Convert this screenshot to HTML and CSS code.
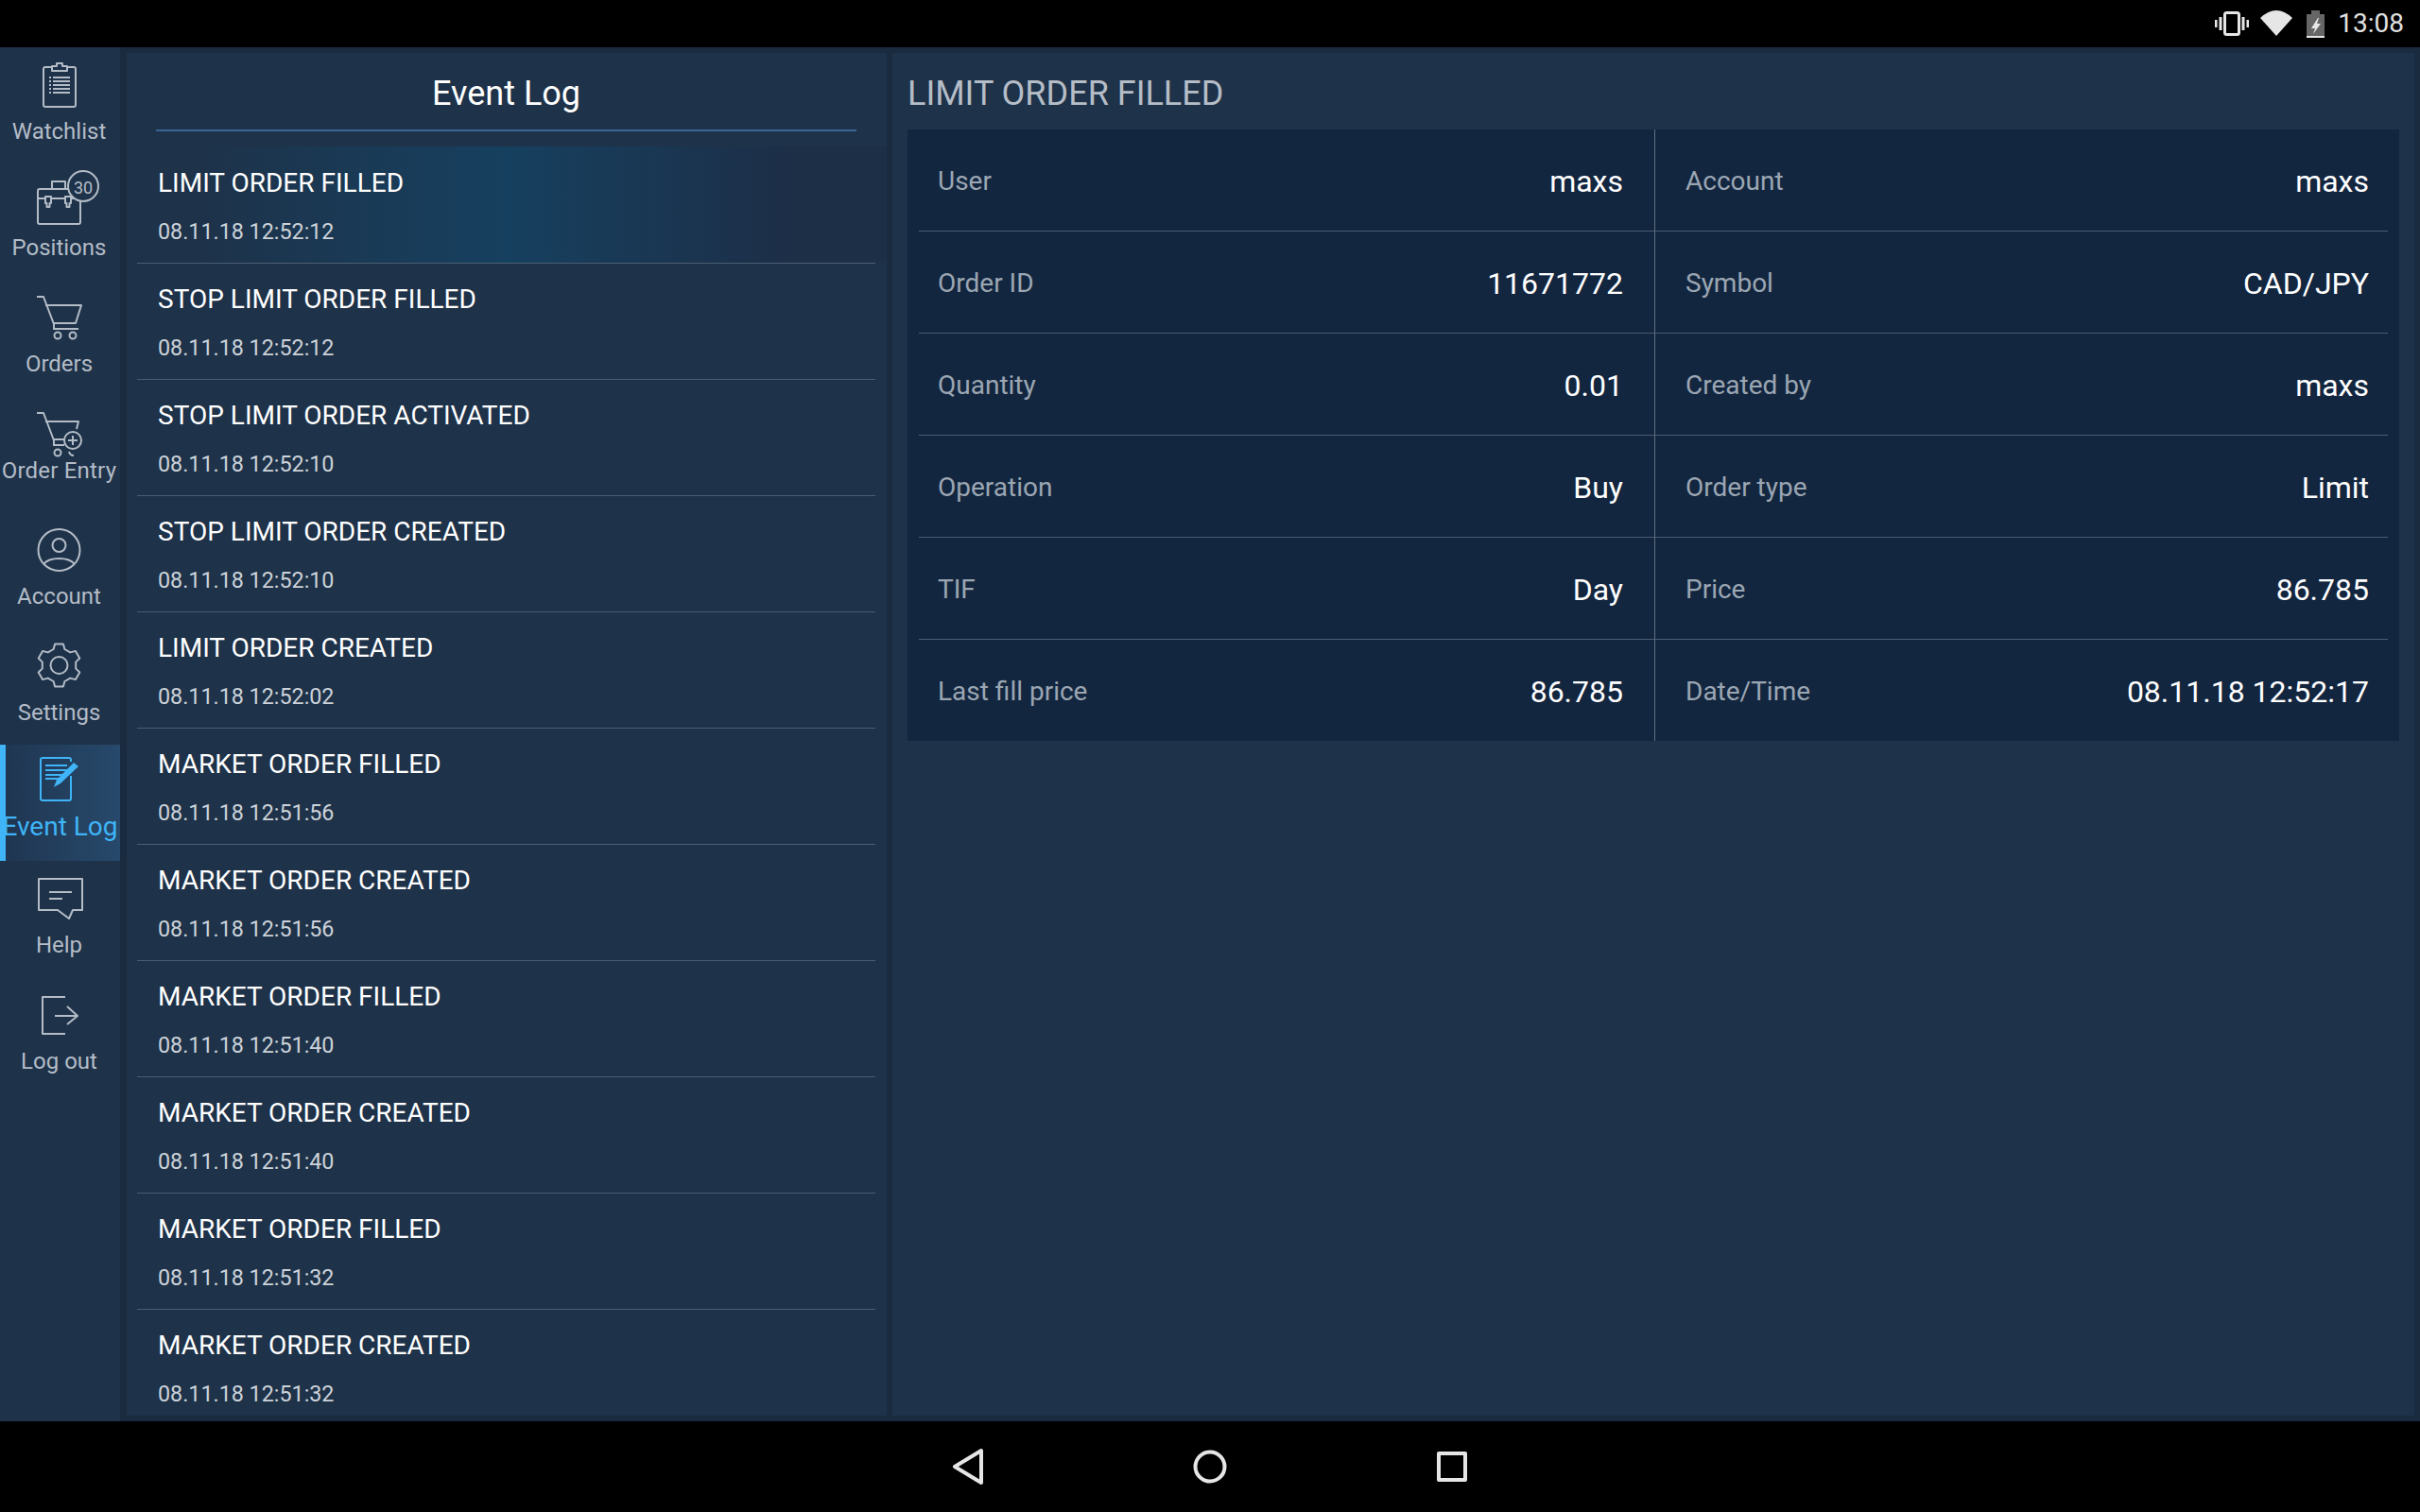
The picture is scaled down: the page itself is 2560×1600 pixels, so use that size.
FILE: index.html
```html
<!DOCTYPE html>
<html>
<head>
  <meta charset="utf-8">
  <title>Event Log</title>
  <link rel="stylesheet" href="styles.css">
</head>
<body>
  <div class="status-bar">
    <svg class="status-vibrate" width="36" height="26" viewBox="0 0 36 26">
      <rect x="10.5" y="1.5" width="15" height="23" rx="2"></rect>
      <path d="M1 9v8M6 6v14M30 6v14M35 9v8"></path>
    </svg>
    <svg class="status-wifi" width="34" height="27" viewBox="0 0 34 27">
      <path d="M0 8Q17-8 34 8L17 27Z"></path>
    </svg>
    <svg class="status-battery" width="19" height="29" viewBox="0 0 19 29">
      <path class="battery-body" d="M5 0h9v4h5v25H0V4h5Z"></path>
      <path class="battery-level" d="M0 27h19v2H0Z"></path>
      <path class="battery-bolt" d="M12 8 5 19h4l-2 6 8-11h-4l2-6Z"></path>
    </svg>
    <span class="status-time">13:08</span>
  </div>

  <div class="main">
    <nav class="sidebar">
      <a class="nav-item">
        <svg class="nav-icon" viewBox="0 0 71 66">
          <path d="M27 13H20a2 2 0 0 0-2 2V53a2 2 0 0 0 2 2H50a2 2 0 0 0 2-2V15a2 2 0 0 0-2-2H43"></path>
          <path d="M27 17V12h5V9h6v3h5v5Z"></path>
          <path d="M24 24h2M28 24H46M24 28h2M28 28H46M24 32h2M28 32H46M24 36h2M28 36H46M24 40h2M28 40H46"></path>
        </svg>
        <span class="nav-label">Watchlist</span>
      </a>
      <a class="nav-item">
        <svg class="nav-icon" viewBox="0 0 71 66">
          <path d="M14 19H55a2 2 0 0 1 2 2V54a2 2 0 0 1-2 2H14a2 2 0 0 1-2-2V21a2 2 0 0 1 2-2Z"></path>
          <path d="M27 19V11H41V19M12 29H20M26 29H41M47 29H57"></path>
          <path d="M20 27h6v7h-1.500v4h-3v-4H20ZM41 27h6v7h-1.500v4h-3v-4H41Z"></path>
        </svg>
        <span class="nav-badge">30</span>
        <span class="nav-label">Positions</span>
      </a>
      <a class="nav-item">
        <svg class="nav-icon" viewBox="0 0 71 66">
          <path d="M11 10H18L29 39V44"></path>
          <path d="M20 19H58L52 38H28M28 44H55"></path>
          <circle cx="33" cy="51" r="3.500"></circle>
          <circle cx="49" cy="51" r="3.500"></circle>
        </svg>
        <span class="nav-label">Orders</span>
      </a>
      <a class="nav-item">
        <svg class="nav-icon" viewBox="0 0 71 66">
          <path d="M11 10H18L29 39V45"></path>
          <path d="M20 19H55L53 27M28 38H40M28 44H40"></path>
          <circle cx="33" cy="52" r="3.500"></circle>
          <path d="M45 51q1 4 5 4"></path>
          <circle cx="49" cy="39" r="9"></circle>
          <path d="M49 34v10M44 39h10"></path>
        </svg>
        <span class="nav-label nav-label-tight">Order Entry</span>
      </a>
      <a class="nav-item">
        <svg class="nav-icon" viewBox="0 0 71 66">
          <circle cx="34.500" cy="32" r="22"></circle>
          <circle cx="34.500" cy="27" r="7"></circle>
          <path d="M18 47C22 42 28 41 34.500 41S47 42 51 47"></path>
        </svg>
        <span class="nav-label">Account</span>
      </a>
      <a class="nav-item">
        <svg class="nav-icon" viewBox="0 0 71 66">
          <g transform="translate(34.500 31)">
            <path d="M-4.400-22.600H4.400L5.900-17 11.800-13.600 17.400-15.100 21.800-7.500 17.700-3.400V3.400L21.800 7.500 17.400 15.100 11.800 13.600 5.900 17 4.400 22.600H-4.400L-5.900 17-11.800 13.600-17.400 15.100-21.800 7.500-17.700 3.400V-3.400L-21.800-7.500-17.400-15.100-11.800-13.600-5.900-17Z"></path>
            <circle r="9"></circle>
          </g>
        </svg>
        <span class="nav-label">Settings</span>
      </a>
      <a class="nav-item nav-item-active">
        <svg class="nav-icon" viewBox="0 0 71 66">
          <path d="M47 25V49a2 2 0 0 1-2 2H17a2 2 0 0 1-2-2V8a2 2 0 0 1 2-2H45a2 2 0 0 1 2 2V10"></path>
          <path d="M20 14H43M20 19H43M20 24H43M20 28H36"></path>
          <path class="nav-icon-fill" d="M50 11 55 15 36 33 29 37 32 29Z"></path>
        </svg>
        <span class="nav-label">Event Log</span>
      </a>
      <a class="nav-item">
        <svg class="nav-icon" viewBox="0 0 71 66">
          <path d="M13 11H59V44H49L45 53 33 44H13Z"></path>
          <path d="M24 25H48M24 32H38"></path>
        </svg>
        <span class="nav-label">Help</span>
      </a>
      <a class="nav-item">
        <svg class="nav-icon" viewBox="0 0 71 66">
          <path d="M41 13H17V52H41"></path>
          <path d="M30 33H54M43 23 54 33 43 42"></path>
        </svg>
        <span class="nav-label">Log out</span>
      </a>
    </nav>

    <section class="log-panel">
      <h1 class="log-title">Event Log</h1>
      <div class="log-list">
        <div class="log-row log-row-active">
          <div class="log-name">LIMIT ORDER FILLED</div>
          <div class="log-time">08.11.18 12:52:12</div>
        </div>
        <div class="log-row">
          <div class="log-name">STOP LIMIT ORDER FILLED</div>
          <div class="log-time">08.11.18 12:52:12</div>
        </div>
        <div class="log-row">
          <div class="log-name">STOP LIMIT ORDER ACTIVATED</div>
          <div class="log-time">08.11.18 12:52:10</div>
        </div>
        <div class="log-row">
          <div class="log-name">STOP LIMIT ORDER CREATED</div>
          <div class="log-time">08.11.18 12:52:10</div>
        </div>
        <div class="log-row">
          <div class="log-name">LIMIT ORDER CREATED</div>
          <div class="log-time">08.11.18 12:52:02</div>
        </div>
        <div class="log-row">
          <div class="log-name">MARKET ORDER FILLED</div>
          <div class="log-time">08.11.18 12:51:56</div>
        </div>
        <div class="log-row">
          <div class="log-name">MARKET ORDER CREATED</div>
          <div class="log-time">08.11.18 12:51:56</div>
        </div>
        <div class="log-row">
          <div class="log-name">MARKET ORDER FILLED</div>
          <div class="log-time">08.11.18 12:51:40</div>
        </div>
        <div class="log-row">
          <div class="log-name">MARKET ORDER CREATED</div>
          <div class="log-time">08.11.18 12:51:40</div>
        </div>
        <div class="log-row">
          <div class="log-name">MARKET ORDER FILLED</div>
          <div class="log-time">08.11.18 12:51:32</div>
        </div>
        <div class="log-row">
          <div class="log-name">MARKET ORDER CREATED</div>
          <div class="log-time">08.11.18 12:51:32</div>
        </div>
      </div>
    </section>

    <section class="detail-panel">
      <h2 class="detail-title">LIMIT ORDER FILLED</h2>
      <div class="detail-grid">
        <div class="detail-cell"><span class="detail-label">User</span><span class="detail-value">maxs</span></div>
        <div class="detail-cell"><span class="detail-label">Account</span><span class="detail-value">maxs</span></div>
        <div class="detail-cell"><span class="detail-label">Order ID</span><span class="detail-value">11671772</span></div>
        <div class="detail-cell"><span class="detail-label">Symbol</span><span class="detail-value">CAD/JPY</span></div>
        <div class="detail-cell"><span class="detail-label">Quantity</span><span class="detail-value">0.01</span></div>
        <div class="detail-cell"><span class="detail-label">Created by</span><span class="detail-value">maxs</span></div>
        <div class="detail-cell"><span class="detail-label">Operation</span><span class="detail-value">Buy</span></div>
        <div class="detail-cell"><span class="detail-label">Order type</span><span class="detail-value">Limit</span></div>
        <div class="detail-cell"><span class="detail-label">TIF</span><span class="detail-value">Day</span></div>
        <div class="detail-cell"><span class="detail-label">Price</span><span class="detail-value">86.785</span></div>
        <div class="detail-cell"><span class="detail-label">Last fill price</span><span class="detail-value">86.785</span></div>
        <div class="detail-cell"><span class="detail-label">Date/Time</span><span class="detail-value">08.11.18 12:52:17</span></div>
      </div>
    </section>
  </div>

  <div class="nav-bar">
    <svg class="nav-bar-icon" width="40" height="40" viewBox="0 0 40 40">
      <path d="M34 3V37L6 20Z"></path>
    </svg>
    <svg class="nav-bar-icon" width="40" height="40" viewBox="0 0 40 40">
      <circle cx="20" cy="20" r="15.500"></circle>
    </svg>
    <svg class="nav-bar-icon" width="40" height="40" viewBox="0 0 40 40">
      <rect x="6" y="6" width="28" height="28"></rect>
    </svg>
  </div>
</body>
</html>
```

FILE: styles.css
```css
html,
body {
  margin: 0;
  height: 100%;
}

body {
  display: flex;
  flex-direction: column;
  background: #000;
  font-family: Roboto, "Liberation Sans", sans-serif;
  overflow: hidden;
}

.status-bar {
  height: 50px;
  display: flex;
  align-items: center;
  justify-content: flex-end;
  padding-right: 17px;
  color: #e0e0e0;
}

.status-vibrate {
  fill: none;
  stroke: #e6e6e6;
  stroke-width: 3;
}

.status-wifi {
  margin-left: 12px;
  margin-top: -1px;
  fill: #e6e6e6;
}

.status-battery {
  margin-left: 15px;
}

.battery-body {
  fill: #666;
}

.battery-level,
.battery-bolt {
  fill: #e6e6e6;
}

.status-time {
  margin-left: 14px;
  font-size: 28px;
  line-height: 52px;
}

.main {
  flex: 1;
  min-height: 0;
  display: flex;
  background: #1a2b40;
  padding-bottom: 6px;
}

.sidebar {
  width: 127px;
  flex: none;
  margin-bottom: -6px;
  background: #1e3249;
}

.nav-item {
  position: relative;
  display: flex;
  flex-direction: column;
  align-items: center;
  height: 123px;
  padding-top: 8px;
  box-sizing: border-box;
  color: #b3bcc7;
  white-space: nowrap;
}

.nav-item-active {
  background: linear-gradient(to right, #1f3550, #27496b);
  box-shadow: inset 6px 0 0 #3fb4f7;
  color: #3fb4f7;
}

.nav-icon {
  width: 71px;
  height: 66px;
  flex: none;
  overflow: visible;
  fill: none;
  stroke: currentColor;
  stroke-width: 2;
  stroke-linejoin: round;
}

.nav-icon-fill {
  fill: currentColor;
  stroke: none;
}

.nav-label {
  margin-right: 2px;
  font-size: 24px;
  line-height: 30px;
}

.nav-label-tight {
  margin-top: -10px;
  letter-spacing: 0.2px;
}

.nav-item-active .nav-label {
  margin-right: 0;
  margin-top: -2px;
  font-size: 28px;
}

.nav-badge {
  position: absolute;
  left: 71px;
  top: 7px;
  width: 30px;
  height: 30px;
  border: 2px solid #b3bcc7;
  border-radius: 50%;
  background: #1e3249;
  font-size: 18px;
  line-height: 33px;
  text-align: center;
}

.log-panel {
  width: 804px;
  flex: none;
  margin: 6px 0 0 7px;
  background: #1e3249;
  overflow: hidden;
  display: flex;
  flex-direction: column;
}

.log-title {
  margin: 0 32px 16px 31px;
  height: 81px;
  border-bottom: 2px solid #3a6596;
  font-size: 36px;
  font-weight: 400;
  line-height: 86px;
  text-align: center;
  color: #fff;
}

.log-list {
  flex: 1;
  min-height: 0;
  overflow: hidden;
}

.log-row {
  position: relative;
  height: 123px;
  padding: 22px 0 0 33px;
  box-sizing: border-box;
}

.log-row::after {
  content: "";
  position: absolute;
  left: 11px;
  right: 12px;
  bottom: -1px;
  height: 1px;
  background: #4b5d73;
}

.log-row-active {
  background: linear-gradient(to right, #1e3249 8%, #16405f 50%, #1d2e47 88%);
}

.log-name {
  font-size: 28px;
  line-height: 34px;
  color: #fff;
}

.log-time {
  margin-top: 19px;
  font-size: 23.3px;
  line-height: 30px;
  color: #ccd2d9;
}

.detail-panel {
  flex: 1;
  margin: 6px 6px 0 6px;
  padding: 0 16px;
  background: #1e3249;
}

.detail-title {
  margin: 0;
  height: 81px;
  font-size: 36px;
  font-weight: 400;
  line-height: 86px;
  color: #b5bdc7;
}

.detail-grid {
  display: grid;
  grid-template-columns: 791px 787px;
  grid-template-rows: repeat(5, 108px) 107px;
  background: #13263f;
}

.detail-cell {
  display: flex;
  align-items: center;
  justify-content: space-between;
  box-sizing: border-box;
  padding-top: 2px;
  border-bottom: 1px solid #4b5d73;
}

.detail-cell:nth-child(odd) {
  margin-left: 12px;
  padding-left: 20px;
  padding-right: 33px;
  border-right: 1px solid #627184;
}

.detail-cell:nth-child(even) {
  margin-right: 12px;
  padding-left: 32px;
  padding-right: 20px;
}

.detail-cell:nth-last-child(-n+2) {
  border-bottom: 0;
}

.detail-label {
  font-size: 28px;
  line-height: 34px;
  padding-top: 1px;
  color: #9ba6b3;
}

.detail-value {
  font-size: 32px;
  color: #fff;
}

.nav-bar {
  height: 96px;
  flex: none;
  display: flex;
  align-items: center;
  justify-content: center;
  gap: 216px;
}

.nav-bar-icon {
  fill: none;
  stroke: #e6e6e6;
  stroke-width: 4;
  stroke-linejoin: round;
}
```
